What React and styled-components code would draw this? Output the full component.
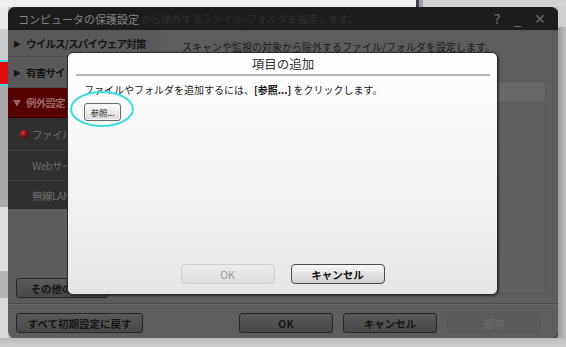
import React from "react";
import styled, { createGlobalStyle } from "styled-components";

const Global = createGlobalStyle`
  html, body { margin: 0; padding: 0; }
  body { font-family: "Noto Sans CJK JP", "Noto Sans", sans-serif; }
`;

const FONT = `"Noto Sans CJK JP", "Noto Sans", sans-serif`;

const Page = styled.div`
  position: relative;
  width: 566px;
  height: 347px;
  overflow: hidden;
  display: flex;
  flex-direction: column;
  background: #c2c2c2;
  font-family: ${FONT};
`;

const TopStrip = styled.div`
  height: 7px;
  display: flex;
  flex-shrink: 0;
`;

const Seg = styled.div`
  width: ${(p) => (p.$w ? `${p.$w}px` : "auto")};
  height: ${(p) => (p.$h ? `${p.$h}px` : "auto")};
  flex: ${(p) => (p.$w || p.$h ? "none" : "1")};
  background: ${(p) => p.$bg};
`;

const MiddleRow = styled.div`
  display: flex;
  height: 331px;
  flex-shrink: 0;
`;

const LeftStrip = styled.div`
  width: 8px;
  display: flex;
  flex-direction: column;
`;

const RedBlob = styled.div`
  height: 22px;
  flex: none;
  background: #e01010;
  border-top: 2px solid #49d6dc;
  border-bottom: 2px solid #49d6dc;
`;

const RightStrip = styled.div`
  flex: 1;
  display: flex;
  flex-direction: column;
`;

const BottomStrip = styled.div`
  flex: 1;
  background: linear-gradient(#bcbcbc, #cfcfcf);
`;

const Window = styled.div`
  width: 550px;
  display: flex;
  flex-direction: column;
  background: #5d5d5d;
  border-radius: 7px;
  overflow: hidden;
  box-shadow: 1px 1px 0 #3a3a3a, 2px 2px 2px rgba(0, 0, 0, 0.35);
`;

const TitleBar = styled.div`
  height: 23px;
  flex-shrink: 0;
  display: flex;
  align-items: center;
  padding: 0 12px 0 10px;
  background: #1c1c1c;
`;

const Title = styled.span`
  font-size: 11px;
  color: #858585;
  white-space: nowrap;
`;

const Ghost = styled.span`
  font-size: 10.2px;
  color: #2f2f2f;
  margin-left: 2px;
  white-space: nowrap;
`;

const Controls = styled.div`
  margin-left: auto;
  display: flex;
  align-items: center;
  gap: 13px;
  color: #6c6c6c;
  font-family: "DejaVu Sans", sans-serif;
  font-size: 14px;
`;

const Ctl = styled.span`
  display: inline-block;
  line-height: 1;
  font-weight: ${(p) => (p.$thin ? 200 : 400)};
`;

const Body = styled.div`
  display: flex;
  height: 272px;
  flex-shrink: 0;
`;

const Sidebar = styled.div`
  width: 153px;
  display: flex;
  flex-direction: column;
  background: #5c5c5c;
`;

const NavItem = styled.div`
  height: ${(p) => p.$h}px;
  flex-shrink: 0;
  display: flex;
  align-items: center;
  gap: 5px;
  padding-left: 5px;
  background: ${(p) => (p.$active ? "#560000" : "#595959")};
  border-bottom: 1px solid ${(p) => (p.$active ? "#3a0000" : "#4a4a4a")};
  box-sizing: border-box;
  color: ${(p) => (p.$active ? "#9a6666" : "#141414")};
  font-size: 10.5px;
  font-weight: bold;
  letter-spacing: -0.8px;
  white-space: nowrap;
`;

const Arrow = styled.span`
  font-size: 8px;
  letter-spacing: 0;
  width: 8px;
`;

const SubList = styled.div`
  background: #2f2f2f;
  display: flex;
  flex-direction: column;
`;

const SubItem = styled.div`
  height: ${(p) => p.$h}px;
  display: flex;
  align-items: center;
  padding-left: 12px;
  gap: 4px;
  box-sizing: border-box;
  border-top: ${(p) => (p.$first ? "none" : "1px solid #3e3e3e")};
  color: #6c6c6c;
  font-size: 10.5px;
  letter-spacing: -0.5px;
  white-space: nowrap;
`;

const Dot = styled.span`
  width: 8px;
  height: 8px;
  border-radius: 50%;
  background: radial-gradient(circle at 35% 35%, #c43a3a, #6a0000 70%);
  visibility: ${(p) => (p.$show ? "visible" : "hidden")};
`;

const SideFill = styled.div`
  flex: 1;
  display: flex;
  align-items: flex-end;
  padding: 0 0 4px 8px;
`;

const Content = styled.div`
  flex: 1;
  display: flex;
  flex-direction: column;
  padding: 9px 12px 8px 9px;
`;

const Lead = styled.div`
  font-size: 10px;
  line-height: 16px;
  color: #1c1c1c;
  margin-left: 12px;
  white-space: nowrap;
`;

const ListBox = styled.div`
  margin-top: 26px;
  flex: 1;
  display: flex;
  flex-direction: column;
  border: 1px solid #555;
  background: #606060;
`;

const ListHead = styled.div`
  height: 20px;
  background: #686868;
  border-bottom: 1px solid #575757;
`;

const Footer = styled.div`
  flex: 1;
  display: flex;
  flex-direction: column;
  padding: 1px 0 0;
`;

const Rule = styled.div`
  height: 1px;
  background: #4a4a4a;
  border-bottom: 1px solid #676767;
`;

const FooterRow = styled.div`
  display: flex;
  align-items: center;
  padding: 8px 17px 0 8px;
  gap: 10px;
`;

const DarkBtn = styled.div`
  width: ${(p) => p.$w}px;
  height: 20px;
  box-sizing: border-box;
  display: flex;
  align-items: center;
  justify-content: center;
  border: 1px solid ${(p) => (p.$disabled ? "#565656" : "#272727")};
  border-radius: 3px;
  background: ${(p) =>
    p.$disabled ? "#5a5a5a" : "linear-gradient(#5a5a5a, #474747)"};
  color: ${(p) => (p.$disabled ? "#686868" : "#151515")};
  font-size: 10.5px;
  font-weight: bold;
  white-space: nowrap;
  overflow: hidden;
  margin-left: ${(p) => (p.$auto ? "auto" : "0")};
`;

/* Dialog (overlay) */
const Dialog = styled.div`
  position: absolute;
  left: 67px;
  top: 52px;
  width: 431px;
  height: 243px;
  box-sizing: border-box;
  border: 1px solid #2c2c2c;
  border-radius: 6px;
  background: linear-gradient(#ffffff 0%, #f7f7f7 40%, #e6e6e6 100%);
  box-shadow: 1px 1px 2px rgba(0, 0, 0, 0.5);
  display: flex;
  flex-direction: column;
  padding: 0 7px 10px 8px;
`;

const DialogTitle = styled.div`
  height: 21px;
  display: flex;
  align-items: center;
  justify-content: center;
  font-size: 12.5px;
  color: #333;
`;

const Divider = styled.div`
  height: 2px;
  background: #b4b4b4;
`;

const DialogBody = styled.div`
  position: relative;
  padding: 7px 0 0 8px;
  flex: 1;
  display: flex;
  flex-direction: column;
  align-items: flex-start;
`;

const Message = styled.div`
  font-size: 10px;
  line-height: 14px;
  color: #222;
  white-space: nowrap;
`;

const Strong = styled.b`
  font-weight: bold;
  color: #111;
`;

const SmallBtn = styled.div`
  margin-top: 6px;
  width: 37px;
  height: 18px;
  box-sizing: border-box;
  display: flex;
  align-items: center;
  justify-content: center;
  border: 1px solid #6a6a6a;
  border-radius: 3px;
  background: linear-gradient(#fbfbfb, #d9d9d9);
  box-shadow: inset 0 0 0 1px #f4f4f4;
  font-size: 8.5px;
  color: #222;
`;

const Ring = styled.div`
  position: absolute;
  left: -6px;
  top: 15px;
  width: 64px;
  height: 36px;
  box-sizing: border-box;
  border: 2px solid #3fdbe3;
  border-radius: 50%;
`;

const DialogFooter = styled.div`
  display: flex;
  justify-content: center;
  gap: 16px;
  padding-right: 1px;
`;

const DlgBtn = styled.div`
  width: 94px;
  height: 20px;
  box-sizing: border-box;
  display: flex;
  align-items: center;
  justify-content: center;
  border-radius: 4px;
  border: 1px solid ${(p) => (p.$disabled ? "#cfcfcf" : "#4a4a4a")};
  background: ${(p) =>
    p.$disabled
      ? "linear-gradient(#ececec, #dedede)"
      : "linear-gradient(#f8f8f8, #d0d0d0)"};
  color: ${(p) => (p.$disabled ? "#9a9a9a" : "#111")};
  font-size: 10.5px;
  font-weight: ${(p) => (p.$disabled ? "normal" : "bold")};
`;

export default function App() {
  return (
    <>
      <Global />
      <Page>
        <TopStrip>
          <Seg $w={416} $bg="#efefef" />
          <Seg $w={3} $bg="#3b4049" />
          <Seg $w={4} $bg="#9aa0a8" />
          <Seg $bg="#d3d3d3" />
        </TopStrip>
        <MiddleRow>
          <LeftStrip>
            <Seg $h={22} $bg="#e9e9e9" />
            <Seg $h={31} $bg="#cdcdcd" />
            <RedBlob />
            <Seg $h={121} $bg="#a9a9a9" />
            <Seg $h={64} $bg="#dedede" />
            <Seg $h={27} $bg="#b5b5b5" />
            <Seg $bg="#d9d9d9" />
          </LeftStrip>
          <Window>
            <TitleBar>
              <Title>コンピュータの保護設定</Title>
              <Ghost>から除外するファイル/フォルダを設定します。</Ghost>
              <Controls>
                <Ctl>?</Ctl>
                <Ctl>_</Ctl>
                <Ctl $thin>✕</Ctl>
              </Controls>
            </TitleBar>
            <Body>
              <Sidebar>
                <NavItem $h={27}>
                  <Arrow>▶</Arrow>ウイルス/スパイウェア対策
                </NavItem>
                <NavItem $h={31}>
                  <Arrow>▶</Arrow>有害サイト規制
                </NavItem>
                <NavItem $h={30} $active>
                  <Arrow>▼</Arrow>例外設定
                </NavItem>
                <SubList>
                  <SubItem $h={32} $first>
                    <Dot $show />
                    ファイル/フォルダ
                  </SubItem>
                  <SubItem $h={30}>
                    <Dot />
                    Webサイト
                  </SubItem>
                  <SubItem $h={29}>
                    <Dot />
                    無線LAN
                  </SubItem>
                </SubList>
                <SideFill>
                  <DarkBtn $w={92}>その他の設定</DarkBtn>
                </SideFill>
              </Sidebar>
              <Content>
                <Lead>スキャンや監視の対象から除外するファイル/フォルダを設定します。</Lead>
                <ListBox>
                  <ListHead />
                </ListBox>
              </Content>
            </Body>
            <Footer>
              <Rule />
              <FooterRow>
                <DarkBtn $w={127}>すべて初期設定に戻す</DarkBtn>
                <DarkBtn $w={94} $auto>OK</DarkBtn>
                <DarkBtn $w={94}>キャンセル</DarkBtn>
                <DarkBtn $w={94} $disabled>適用</DarkBtn>
              </FooterRow>
            </Footer>
          </Window>
          <RightStrip>
            <Seg $h={20} $bg="#d0d0d0" />
            <Seg $bg="linear-gradient(90deg,#9c9c9c,#bdbdbd)" />
          </RightStrip>
        </MiddleRow>
        <BottomStrip />

        <Dialog>
          <DialogTitle>項目の追加</DialogTitle>
          <Divider />
          <DialogBody>
            <Message>
              ファイルやフォルダを追加するには、<Strong>[参照...]</Strong> をクリックします。
            </Message>
            <SmallBtn>参照...</SmallBtn>
            <Ring />
          </DialogBody>
          <DialogFooter>
            <DlgBtn $disabled>OK</DlgBtn>
            <DlgBtn>キャンセル</DlgBtn>
          </DialogFooter>
        </Dialog>
      </Page>
    </>
  );
}
